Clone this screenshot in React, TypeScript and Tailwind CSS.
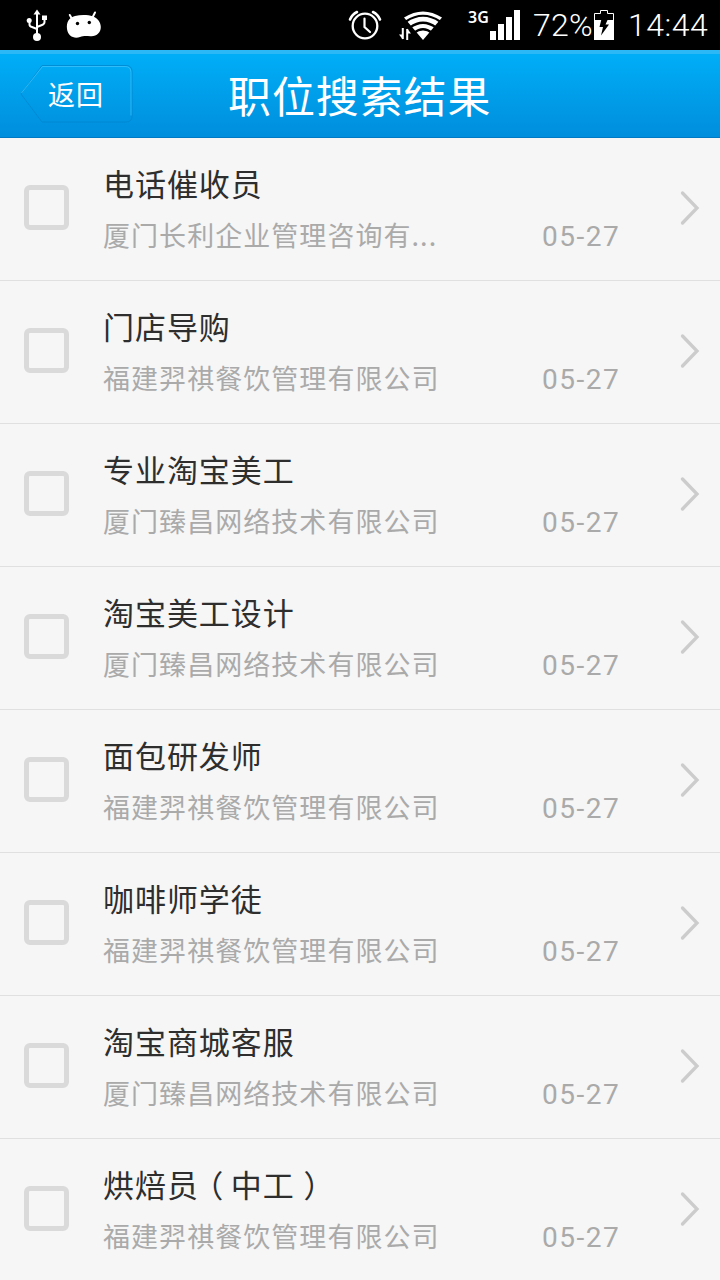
import React from 'react';

interface Job {
  title: string;
  company: string;
  date: string;
}

const jobs: Job[] = [
  { title: '电话催收员', company: '厦门长利企业管理咨询有...', date: '05-27' },
  { title: '门店导购', company: '福建羿祺餐饮管理有限公司', date: '05-27' },
  { title: '专业淘宝美工', company: '厦门臻昌网络技术有限公司', date: '05-27' },
  { title: '淘宝美工设计', company: '厦门臻昌网络技术有限公司', date: '05-27' },
  { title: '面包研发师', company: '福建羿祺餐饮管理有限公司', date: '05-27' },
  { title: '咖啡师学徒', company: '福建羿祺餐饮管理有限公司', date: '05-27' },
  { title: '淘宝商城客服', company: '厦门臻昌网络技术有限公司', date: '05-27' },
  { title: '烘焙员（中工）', company: '福建羿祺餐饮管理有限公司', date: '05-27' },
];

const UsbIcon = () => (
  <svg className="ml-[26px] shrink-0" width="22" height="50" viewBox="26 0 22 50" fill="none" stroke="white" strokeWidth="2">
    <path d="M37 12v24M29.500 21v3.500q0 2 2.500 2.500l5 2M44.500 18v4q0 2-2.500 3l-5 2" />
    <path d="M37 9.500l3.500 5h-7z" fill="white" stroke="none" />
    <circle cx="29.200" cy="20.500" r="2.500" fill="white" stroke="none" />
    <rect x="42" y="15.500" width="5" height="4.500" fill="white" stroke="none" />
    <circle cx="37" cy="37" r="4" fill="white" stroke="none" />
  </svg>
);

const AndroidIcon = () => (
  <svg className="ml-[18px] shrink-0" width="36" height="50" viewBox="66 0 36 50">
    <path d="M72 19l-2.200-4M92.500 17.500l2.500-5" stroke="white" strokeWidth="2" strokeLinecap="round" />
    <path d="M67 29c-.8-7 2-11.500 8-13 6-1.400 13-1.300 18 .5 5 1.700 7.800 6 7.800 10.500 0 5.500-3.800 9-9.300 9.200-5 .1-7.500-.6-11.500.8-6 2-12-.8-13-8z" fill="white" />
    <circle cx="77.500" cy="23.500" r="1.700" />
    <circle cx="89.300" cy="22.500" r="1.700" />
  </svg>
);

const AlarmIcon = () => (
  <svg className="shrink-0" width="34" height="50" viewBox="348 0 34 50" fill="none" stroke="white" strokeLinecap="round">
    <circle cx="365" cy="26" r="12.300" strokeWidth="2.300" />
    <path d="M364.500 18.500V27l5.500 5" strokeWidth="2.200" />
    <path d="M350 19.500q2-5 7-7.500M380 19.500q-2-5-7-7.500" strokeWidth="2.600" />
  </svg>
);

const WifiIcon = () => (
  <svg className="ml-[16px] shrink-0" width="46" height="50" viewBox="398 0 46 50">
    <path d="M423 40l-19-22.500q19-12 38 0z" fill="white" />
    <g fill="none" stroke="black" strokeWidth="2.200">
      <path d="M406 21.500q17-11.500 34 0" />
      <path d="M410 27.500q13-9.500 26 0" />
      <path d="M414 33q9-7.500 18 0" />
    </g>
    <path d="M400 28h10v12h-10z" />
    <path d="M402.800 28v11M407.200 40V29" stroke="white" strokeWidth="2" />
    <path d="M399 34.500l3.800 5V34.500zM411 33.500l-3.800-5v5z" fill="white" />
  </svg>
);

const SignalIcon = () => (
  <svg className="shrink-0" width="31" height="50" viewBox="490 0 31 50" fill="white">
    <path d="M490 31h6v9h-6zM498 24h6v16h-6zM506 17h6v23h-6zM514 10h6v30h-6z" />
  </svg>
);

const BatteryIcon = () => (
  <svg className="shrink-0" width="20" height="50" viewBox="594 0 20 50">
    <path d="M594.500 20V13.500h6v-3h7v3h6V20" fill="none" stroke="white" />
    <path d="M594 20h20v20h-20z" fill="white" />
    <path d="M601.500 19h6.500l-2.500 5.500h3.500L601 35.500l2-8.500h-3.500z" />
  </svg>
);

const StatusBar = () => (
  <div className="flex h-[50px] shrink-0 items-center bg-black font-['Roboto','Noto_Sans',sans-serif] text-white">
    <UsbIcon />
    <AndroidIcon />
    <div className="flex-1" />
    <AlarmIcon />
    <WifiIcon />
    <span className="ml-[24px] w-[22px] pb-[16px] font-['Noto_Sans',sans-serif] text-[16px] leading-none font-semibold">3G</span>
    <SignalIcon />
    <span className="ml-[12px] w-[61px] text-[32px] leading-[52px] font-light tracking-[0.3px] whitespace-nowrap">72%</span>
    <BatteryIcon />
    <span className="ml-[14px] w-[92px] text-[32px] leading-[52px] font-light tracking-[0.5px] whitespace-nowrap">14:44</span>
  </div>
);

const Header = () => (
  <header className="grid h-[88px] shrink-0 grid-cols-[228px_1fr_228px] items-center border-t-4 border-b border-t-[#2cb8f7] border-b-[#0079c4] bg-linear-to-b from-[#00aef7] to-[#008edd] pb-[4px] text-white">
    <button className="relative ml-[20px] h-[60px] w-[114px]">
      <svg className="absolute inset-0" width="114" height="60" viewBox="0 0 114 60" fill="none">
        <path d="M22 1.500h84q6 0 6 6v44.500q0 6-6 6H22L1 30z" stroke="#0084cc" strokeOpacity=".75" />
        <path d="M1.500 29L22.500 2.500H105q6 0 6 6v43" stroke="#3fc3fa" strokeOpacity=".75" />
      </svg>
      <span className="relative block pl-[28px] text-left text-[27px] leading-[56px] tracking-[1px]">返回</span>
    </button>
    <h1 className="text-[43px] leading-[80px] tracking-[0.9px] whitespace-nowrap">职位搜索结果</h1>
  </header>
);

// Full-width brackets sit in the middle of their cell
const JobTitle = ({ text }: { text: string }) => (
  <>
    {text.split(/([（）])/).map((part, i) =>
      part === '（' || part === '）' ? (
        <span key={i} className="inline-block w-[32px] pl-[2px] text-center [font-feature-settings:'halt']">{part}</span>
      ) : (
        part
      )
    )}
  </>
);

const JobRow = ({ job }: { job: Job }) => (
  <li className="flex h-[143px] shrink-0 items-center border-b border-[#e0e0e0] bg-[#f6f6f6] pb-[3px]">
    <div className="ml-[24px] size-[45px] rounded-[6px] border-[5px] border-[#dadada]" />
    <div className="ml-[34px] flex-1 pt-[3px]">
      <h2 className="text-[31px] leading-[46px] tracking-[0.95px] text-[#2e2e2e]">
        <JobTitle text={job.title} />
      </h2>
      <div className="mt-[6px] flex items-center leading-[46px] text-[#aaaaaa]">
        <p className="w-[439px] text-[27px] tracking-[1.05px]">{job.company}</p>
        <span className="pt-[4px] font-['Roboto',sans-serif] text-[28px] leading-[42px] tracking-[1.5px]">{job.date}</span>
      </div>
    </div>
    <svg className="mr-[20px]" width="20" height="36" viewBox="0 0 20 36" fill="none" stroke="#cccccc" strokeWidth="3.300" strokeLinecap="round">
      <path d="M2.500 3l14.500 15L2.500 33" />
    </svg>
  </li>
);

export default function App() {
  return (
    <div className="flex h-[1280px] w-[720px] flex-col overflow-hidden bg-[#f6f6f6] font-['Noto_Sans_CJK_SC',sans-serif]">
      <StatusBar />
      <Header />
      <ul className="flex flex-col">
        {jobs.map((job) => (
          <JobRow key={job.title} job={job} />
        ))}
      </ul>
    </div>
  );
}
